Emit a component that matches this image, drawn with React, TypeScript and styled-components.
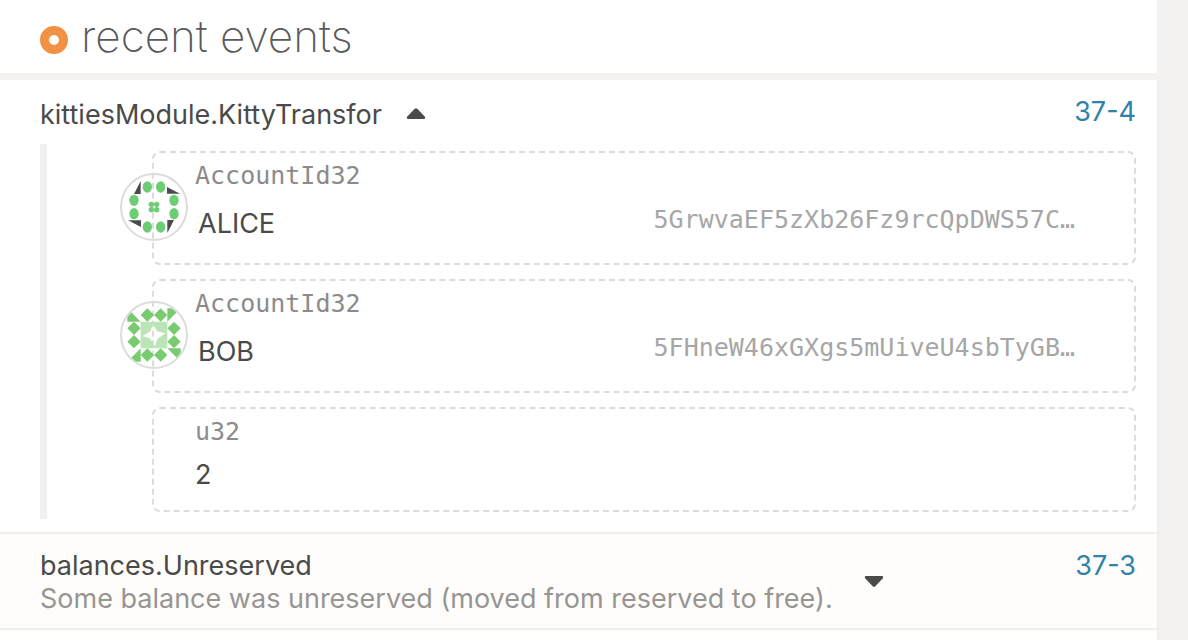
import React, { useState } from 'react';
import styled, { createGlobalStyle } from 'styled-components';

const GlobalStyle = createGlobalStyle`
  *, *::before, *::after { box-sizing: border-box; }
  body {
    margin: 0;
    background: #f3f2f0;
    color: #4a4a4a;
    font-family: Inter, "Liberation Sans", sans-serif;
    font-size: 27px;
    line-height: 33px;
  }
`;

const Panel = styled.main`
  margin-right: 29px;
`;

const Header = styled.header`
  display: flex;
  align-items: center;
  gap: 13px;
  height: 80px;
  margin-right: 2px;
  padding: 0 40px;
  background: #fff;
  border-bottom: 7px solid #f3f2f0;
`;

const Dot = styled.span`
  flex: none;
  width: 28px;
  height: 28px;
  margin-top: 6px;
  border: 9px solid #f19143;
  border-radius: 50%;
`;

const Title = styled.h1`
  margin: 0;
  padding-bottom: 2px;
  color: #5a5a5a;
  font-size: 44px;
  font-weight: 200;
  line-height: 54px;
`;

const EventList = styled.ul`
  margin: 0;
  padding: 0;
  list-style: none;
`;

const EventItem = styled.li<{ $alt?: boolean }>`
  padding: 15px 21px 13px 40px;
  background: ${(p) => (p.$alt ? '#fffdfb' : '#fff')};
  border-right: 2px solid #f0efee;
  border-bottom: 2px solid #eeeeed;
`;

const EventHead = styled.div`
  display: flex;
  justify-content: space-between;
  align-items: flex-start;
`;

const Summary = styled.div<{ $gap: number }>`
  display: flex;
  align-items: center;
  gap: ${(p) => p.$gap}px;
`;

const EventName = styled.div<{ $single?: boolean }>`
  padding-top: ${(p) => (p.$single ? 3 : 0)}px;
`;

const EventDoc = styled.div`
  color: #979592;
`;

const Toggle = styled.button`
  display: flex;
  padding: 0;
  border: 0;
  background: none;
  color: inherit;
  cursor: pointer;
`;

const BlockLink = styled.a`
  color: #3182a8;
  text-decoration: none;
`;

const Params = styled.div`
  display: flex;
  flex-direction: column;
  gap: 14px;
  margin-top: 13px;
  padding: 7px 0 7px 105px;
  border-left: 7px solid #f1f1f1;
`;

const Param = styled.div<{ $short?: boolean }>`
  position: relative;
  min-height: ${(p) => (p.$short ? 105 : 114)}px;
  padding: 6px 59px 0 41px;
  border: 2px dashed #dcdcdc;
  border-radius: 8px;
`;

const TypeLabel = styled.div`
  color: #8b8b8b;
  font-family: "DejaVu Sans Mono", monospace;
  font-size: 25px;
`;

const Value = styled.div`
  margin-top: 10px;
`;

const Account = styled.div`
  display: flex;
  justify-content: space-between;
  margin-top: 11px;
  padding-left: 3px;
`;

const AccountName = styled.span`
  padding-top: 4px;
`;

const Address = styled.span`
  color: #a6a6a6;
  font-family: "DejaVu Sans Mono", monospace;
  font-size: 25px;
`;

const Avatar = styled.svg`
  position: absolute;
  top: 20px;
  left: -34px;
`;

const Caret = ({ up }: { up?: boolean }) => (
  <svg width="20" height="12" viewBox="0 0 20 12" aria-hidden="true">
    <path
      d="M2 0h16c1.300 0 1.600 1.500.7 2.400l-7.400 7.800c-.8.8-1.800.8-2.600 0L1.300 2.400C.4 1.500.7 0 2 0z"
      fill="currentColor"
      transform={up ? 'rotate(180 10 6)' : undefined}
    />
  </svg>
);

const turns = [0, 90, 180, 270];

const AliceIcon = () => (
  <Avatar width="68" height="68" viewBox="-102 -102 204 204" role="img" aria-label="ALICE">
    <circle r="99" fill="none" stroke="#dcdcdc" strokeWidth="6" />
    {turns.map((t) => (
      <path key={t} transform={`rotate(${t})`} d="M-60-39h20v-39z" fill="#4b4b4b" />
    ))}
    <g fill="#6dcd75">
      {[[-20, -60], [20, -60], [-60, -20], [-60, 20], [60, -20], [60, 20], [-20, 60], [20, 60]].map(([x, y]) => (
        <ellipse key={`${x},${y}`} cx={x} cy={y} rx="14" ry="17" />
      ))}
      {[[-8, -8], [8, -8], [-8, 8], [8, 8]].map(([x, y]) => (
        <circle key={`${x},${y}`} cx={x} cy={y} r="8" />
      ))}
    </g>
  </Avatar>
);

const BobIcon = () => (
  <Avatar width="68" height="68" viewBox="-102 -102 204 204" role="img" aria-label="BOB">
    <clipPath id="bob-disc">
      <circle r="96" />
    </clipPath>
    <circle r="99" fill="none" stroke="#dcdcdc" strokeWidth="6" />
    <g clipPath="url(#bob-disc)" fill="#79cb70">
      {turns.map((t) => (
        <g key={t} transform={`rotate(${t})`}>
          <path d="M-80-80v40h40z" />
          <path d="M-20-80l20 20-20 20-20-20zM20-80l20 20-20 20-20-20z" />
        </g>
      ))}
    </g>
    <path
      d="M-40-40h80v80h-80zM-2-34L-11-11L-34 3L-11 11L2 34L11 11L34-5L9-11z"
      fill="#bbe5b7"
      fillRule="evenodd"
    />
  </Avatar>
);

export default function App() {
  const [open, setOpen] = useState(true);
  return (
    <>
      <GlobalStyle />
      <Panel>
        <Header>
          <Dot />
          <Title>recent events</Title>
        </Header>
        <EventList>
          <EventItem>
            <EventHead>
              <Summary $gap={24}>
                <EventName $single>kittiesModule.KittyTransfor</EventName>
                <Toggle aria-label="Toggle details" aria-expanded={open} onClick={() => setOpen(!open)}>
                  <Caret up={open} />
                </Toggle>
              </Summary>
              <BlockLink href="#37-4">37-4</BlockLink>
            </EventHead>
            {open && (
              <Params>
                <Param>
                  <AliceIcon />
                  <TypeLabel>AccountId32</TypeLabel>
                  <Account>
                    <AccountName>ALICE</AccountName>
                    <Address>5GrwvaEF5zXb26Fz9rcQpDWS57C…</Address>
                  </Account>
                </Param>
                <Param>
                  <BobIcon />
                  <TypeLabel>AccountId32</TypeLabel>
                  <Account>
                    <AccountName>BOB</AccountName>
                    <Address>5FHneW46xGXgs5mUiveU4sbTyGB…</Address>
                  </Account>
                </Param>
                <Param $short>
                  <TypeLabel>u32</TypeLabel>
                  <Value>2</Value>
                </Param>
              </Params>
            )}
          </EventItem>
          <EventItem $alt>
            <EventHead>
              <Summary $gap={31}>
                <div>
                  <EventName>balances.Unreserved</EventName>
                  <EventDoc>Some balance was unreserved (moved from reserved to free).</EventDoc>
                </div>
                <Toggle aria-label="Toggle details" aria-expanded={false}>
                  <Caret />
                </Toggle>
              </Summary>
              <BlockLink href="#37-3">37-3</BlockLink>
            </EventHead>
          </EventItem>
          <EventItem />
        </EventList>
      </Panel>
    </>
  );
}
